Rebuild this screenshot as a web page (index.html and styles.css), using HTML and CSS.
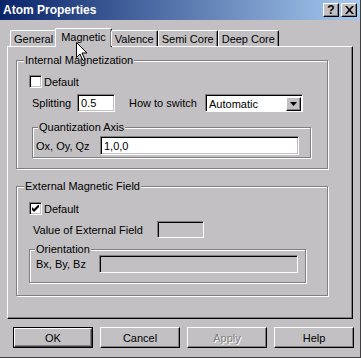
FILE: index.html
```html
<!doctype html>
<html lang="en">

<head>
    <meta charset="utf-8">
    <title>Atom Properties</title>
    <link rel="stylesheet" href="styles.css">
</head>

<body>
    <div class="window">
        <div class="titlebar">
            <span class="title">Atom Properties</span>
            <div class="caption-buttons">
                <span class="cap-btn">?</span>
                <span class="cap-btn">
                    <svg width="9" height="8" viewBox="0 0 9 8">
                        <path d="M0 0h2l2.5 2.7L7 0h2L5.5 4 9 8H7L4.5 5.3 2 8H0l3.5-4z" fill="#000" />
                    </svg>
                </span>
            </div>
        </div>

        <div class="content">
            <!-- Onglets -->
            <div class="tabs">
                <div class="tab first">General</div>
                <div class="tab active">Magnetic</div>
                <div class="tab">Valence</div>
                <div class="tab">Semi Core</div>
                <div class="tab">Deep Core</div>
            </div>

            <div class="sheet">
                <fieldset class="group">
                    <legend>Internal Magnetization</legend>
                    <div class="check-row">
                        <span class="check"></span>Default
                    </div>
                    <div class="field-row split-row">
                        <span class="lbl-split">Splitting</span>
                        <span class="edit edit-split">0.5</span>
                        <span class="lbl-switch">How to switch</span>
                        <span class="combo">
                            <span class="combo-text">Automatic</span>
                            <span class="combo-btn">
                                <svg width="7" height="4" viewBox="0 0 7 4">
                                    <path d="M0 0h7L3.5 4z" fill="#000" />
                                </svg>
                            </span>
                        </span>
                    </div>
                    <fieldset class="group sub quant">
                        <legend>Quantization Axis</legend>
                        <div class="field-row sub-row">
                            <span class="lbl-axis">Ox, Oy, Qz</span>
                            <span class="edit edit-axis">1,0,0</span>
                        </div>
                    </fieldset>
                </fieldset>

                <fieldset class="group external">
                    <legend>External Magnetic Field</legend>
                    <div class="check-row ext-check">
                        <span class="check">
                            <svg width="7" height="7" viewBox="0 0 7 7">
                                <path d="M0 2v3l2 2 5-5V-1L2 4z" fill="#000" />
                            </svg>
                        </span>Default
                    </div>
                    <div class="field-row value-row">
                        <span class="lbl-value">Value of External Field</span>
                        <span class="edit disabled edit-value"></span>
                    </div>
                    <fieldset class="group sub orient">
                        <legend>Orientation</legend>
                        <div class="field-row sub-row orient-row">
                            <span class="lbl-orient">Bx, By, Bz</span>
                            <span class="edit disabled edit-orient"></span>
                        </div>
                    </fieldset>
                </fieldset>
            </div>

            <div class="buttons">
                <span class="btn default"><span>OK</span></span>
                <span class="btn">Cancel</span>
                <span class="btn disabled">Apply</span>
                <span class="btn">Help</span>
            </div>
        </div>

        <!-- Pointeur de la souris -->
        <svg class="cursor" width="12" height="19" viewBox="0 0 12 19">
            <path d="M0.5 0.5v15l3.5-3.5 3 6.5 2-1-3-6.5h5z" fill="#fff" stroke="#000" />
        </svg>
    </div>
</body>

</html>
```

FILE: styles.css
```css
body {
    margin: 0;
    background-color: #c3c0c3;
    font-family: 'Liberation Sans', Arial, sans-serif;
    font-size: 11px;
    color: #000;
}

.window {
    position: relative;
    width: 361px;
    height: 358px;
    box-sizing: border-box;
    border-right: 1px solid #404040;
    border-bottom: 1px solid #404040;
    overflow: hidden;
}

/***** barre de titre *****/
.titlebar {
    height: 20px;
    display: flex;
    align-items: center;
    justify-content: space-between;
    background: linear-gradient(to right, #0a246a, #a6caf0);
    padding: 0 3px 0 3px;
}

.title {
    color: #fff;
    font-weight: bold;
    font-size: 12px;
}

.caption-buttons {
    display: flex;
    gap: 2px;
}

.cap-btn {
    width: 16px;
    height: 14px;
    box-sizing: border-box;
    display: flex;
    align-items: center;
    justify-content: center;
    background: #c3c0c3;
    border-top: 1px solid #fff;
    border-left: 1px solid #fff;
    border-right: 1px solid #000;
    border-bottom: 1px solid #000;
    box-shadow: inset -1px -1px 0 #808080;
    font-weight: bold;
    font-size: 12px;
    line-height: 12px;
}

.content {
    padding-top: 8px;
}

/***** onglets *****/
.tabs {
    display: flex;
    align-items: flex-end;
    margin-left: 10px;
    height: 18px;
    position: relative;
    z-index: 2;
}

.tab {
    height: 16px;
    box-sizing: border-box;
    padding: 1px 3px 0 3px;
    line-height: 14px;
    border-top: 1px solid #fff;
    border-left: 1px solid #fff;
    border-right: 1px solid #000;
    box-shadow: inset -1px 0 0 #808080;
    border-radius: 2px 2px 0 0;
}

.tab.active {
    height: 19px;
    margin: 0 -1px -1px -2px;
    padding: 1px 5px 0 5px;
    background: #c3c0c3;
}

.sheet {
    margin-left: 7px;
    width: 346px;
    height: 273px;
    box-sizing: border-box;
    border-top: 1px solid #fff;
    border-left: 1px solid #fff;
    border-right: 1px solid #000;
    border-bottom: 1px solid #000;
    box-shadow: inset -1px -1px 0 #808080;
    padding: 7px 0 0 8px;
}

/***** cadres de groupe *****/
.group {
    margin: 0;
    padding: 0;
    width: 312px;
    box-sizing: border-box;
    border: 1px solid #808080;
    box-shadow: inset 1px 1px 0 #fff, 1px 1px 0 #fff;
    min-width: 0;
}

.group legend {
    margin-left: 7px;
    padding: 0 1px;
    line-height: 13px;
    height: 13px;
    background: #c3c0c3;
}

.group.sub legend {
    margin-left: 5px;
}

.external {
    margin-top: 11px;
}

.check-row {
    display: flex;
    align-items: center;
    gap: 2px;
    height: 13px;
    margin: 8px 0 0 12px;
}

.ext-check {
    margin-top: 9px;
}

.check {
    width: 13px;
    height: 13px;
    box-sizing: border-box;
    background: #fff;
    border-top: 1px solid #808080;
    border-left: 1px solid #808080;
    border-right: 1px solid #fff;
    border-bottom: 1px solid #fff;
    box-shadow: inset 1px 1px 0 #000, inset -1px -1px 0 #c3c0c3;
    display: flex;
    align-items: center;
    justify-content: center;
}

.field-row {
    display: flex;
    align-items: center;
}

.edit {
    box-sizing: border-box;
    background: #fff;
    border-top: 1px solid #808080;
    border-left: 1px solid #808080;
    border-right: 1px solid #fff;
    border-bottom: 1px solid #fff;
    box-shadow: inset 1px 1px 0 #000, inset -1px -1px 0 #c3c0c3;
    padding-left: 3px;
    display: flex;
    align-items: center;
}

.edit.disabled {
    background: #c3c0c3;
}

/* ligne Splitting / How to switch */
.split-row {
    margin: 6px 0 0 15px;
    height: 18px;
}

.lbl-split {
    width: 45px;
}

.edit-split {
    width: 38px;
    height: 18px;
}

.lbl-switch {
    margin-left: 14px;
    width: 76px;
}

.combo {
    width: 98px;
    height: 18px;
    box-sizing: border-box;
    display: flex;
    align-items: center;
    background: #fff;
    border-top: 1px solid #808080;
    border-left: 1px solid #808080;
    border-right: 1px solid #fff;
    border-bottom: 1px solid #fff;
    box-shadow: inset 1px 1px 0 #000;
    padding: 2px 1px 1px 3px;
}

.combo-text {
    flex: 1;
}

.combo-btn {
    width: 15px;
    height: 14px;
    box-sizing: border-box;
    background: #c3c0c3;
    border-top: 1px solid #fff;
    border-left: 1px solid #fff;
    border-right: 1px solid #000;
    border-bottom: 1px solid #000;
    box-shadow: inset -1px -1px 0 #808080;
    display: flex;
    align-items: center;
    justify-content: center;
}

/* sous-groupes */
.quant {
    margin: 9px 0 10px 15px;
    width: 279px;
}

.sub-row {
    margin: 2px 0 2px 3px;
}

.lbl-axis {
    width: 64px;
}

.edit-axis {
    width: 199px;
    height: 19px;
}

.value-row {
    margin: 6px 0 0 16px;
    height: 17px;
}

.lbl-value {
    width: 124px;
}

.edit-value {
    width: 47px;
    height: 17px;
}

.orient {
    margin: 5px 0 12px 12px;
    width: 277px;
}

.orient-row {
    margin: -1px 0 9px 6px;
}

.lbl-orient {
    width: 63px;
}

.edit-orient {
    width: 199px;
    height: 18px;
}

/***** boutons *****/
.buttons {
    display: flex;
    gap: 7px;
    margin: 8px 0 0 13px;
}

.btn {
    width: 80px;
    height: 21px;
    box-sizing: border-box;
    display: flex;
    align-items: center;
    justify-content: center;
    border-top: 1px solid #fff;
    border-left: 1px solid #fff;
    border-right: 1px solid #000;
    border-bottom: 1px solid #000;
    box-shadow: inset -1px -1px 0 #808080;
}

.btn.default {
    border: 1px solid #000;
    box-shadow: none;
}

.btn.default span {
    display: flex;
    align-items: center;
    justify-content: center;
    width: 100%;
    height: 100%;
    box-sizing: border-box;
    border-top: 1px solid #fff;
    border-left: 1px solid #fff;
    border-right: 1px solid #404040;
    border-bottom: 1px solid #404040;
    box-shadow: inset -1px -1px 0 #808080;
}

.btn.disabled {
    color: #808080;
    text-shadow: 1px 1px 0 #fff;
}

.cursor {
    position: absolute;
    left: 76px;
    top: 42px;
    z-index: 5;
}
```
